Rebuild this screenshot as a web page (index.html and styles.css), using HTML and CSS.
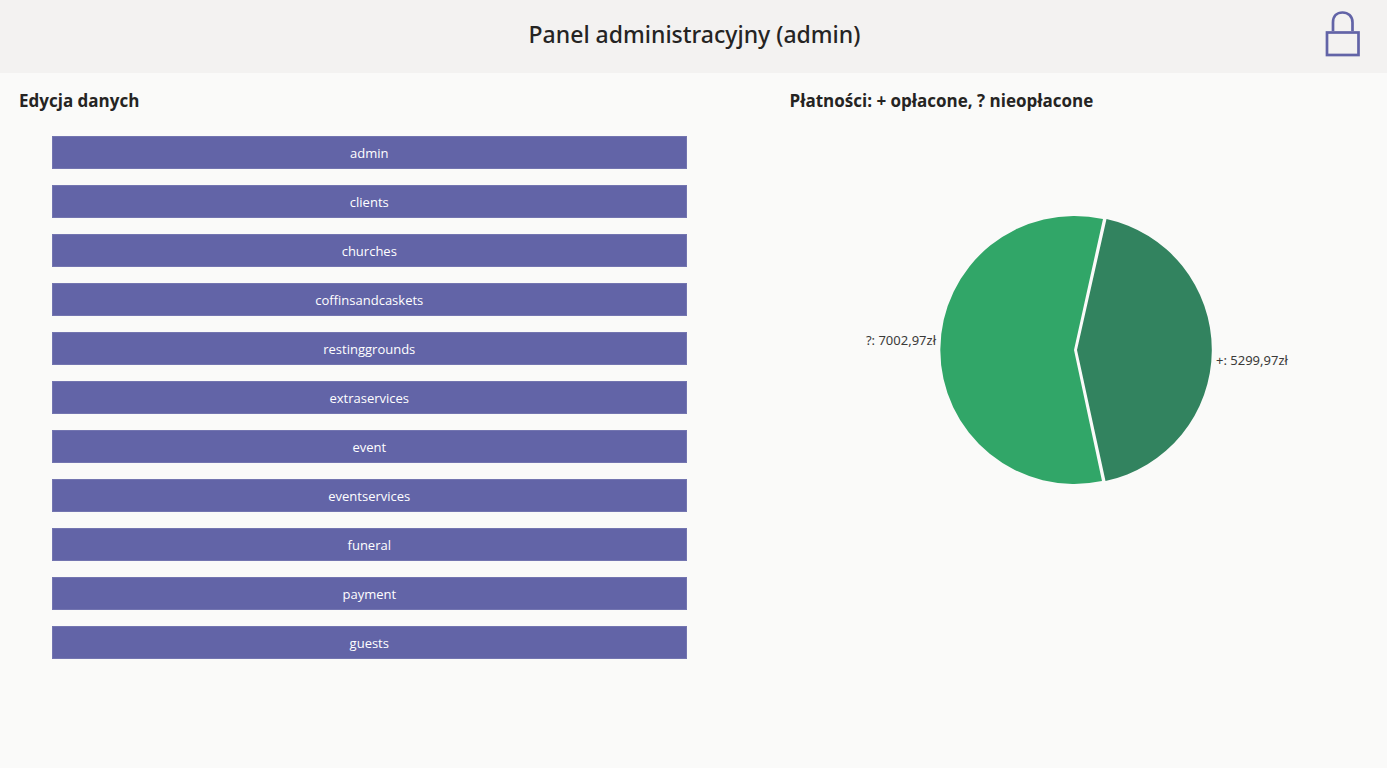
FILE: index.html
```html
<!DOCTYPE html>
<html lang="pl">
<head>
<meta charset="utf-8">
<title>Panel administracyjny</title>
<link rel="stylesheet" href="styles.css">
</head>
<body>
<header class="topbar">
  <h1 class="title">Panel administracyjny (admin)</h1>
  <button class="lock" type="button" aria-label="Wyloguj">
    <svg width="36" height="48" viewBox="0 0 36 48" fill="none" stroke="#6264a7" aria-hidden="true">
      <path d="M8 21V12.500C8 6 12 2.500 17.500 2.500S27.500 6 27.500 12.500V21" stroke-width="2.700"/>
      <rect x="2" y="22.500" width="31.500" height="22.500" stroke-width="2.700"/>
    </svg>
  </button>
</header>
<main class="columns">
  <section class="panel">
    <h2 class="heading">Edycja danych</h2>
    <div class="tables">
      <button class="entry" type="button">admin</button>
      <button class="entry" type="button">clients</button>
      <button class="entry" type="button">churches</button>
      <button class="entry" type="button">coffinsandcaskets</button>
      <button class="entry" type="button">restinggrounds</button>
      <button class="entry" type="button">extraservices</button>
      <button class="entry" type="button">event</button>
      <button class="entry" type="button">eventservices</button>
      <button class="entry" type="button">funeral</button>
      <button class="entry" type="button">payment</button>
      <button class="entry" type="button">guests</button>
    </div>
  </section>
  <section class="panel">
    <h2 class="heading">Płatności: + opłacone, ? nieopłacone</h2>
    <svg class="chart" viewBox="0 0 480 280" role="img" aria-label="Płatności">
      <path class="unpaid" d="M235 140 L264 9 A134 134 0 1 0 263 271 Z"/>
      <path class="paid" d="M238 140 L267.500 9 A134 134 0 0 1 266.500 271 Z"/>
      <text class="label" x="97" y="135" text-anchor="end">?: 7002,97zł</text>
      <text class="label" x="377" y="155">+: 5299,97zł</text>
    </svg>
  </section>
</main>
</body>
</html>
```
FILE: styles.css
```css
* {
  box-sizing: border-box;
}

body {
  margin: 0;
  background: #fafaf9;
  color: #252423;
  font-family: "Segoe UI", "Open Sans", "Noto Sans", sans-serif;
}

.topbar {
  display: grid;
  grid-template-columns: 1fr auto 1fr;
  align-items: center;
  padding: 10px 26px 15px 28px;
  background: #f3f2f1;
}

.title {
  grid-column: 2;
  margin: 0;
  font-family: "Segoe UI", "Noto Sans", sans-serif;
  font-size: 23px;
  line-height: 32px;
  font-weight: 500;
}

.lock {
  justify-self: end;
  display: flex;
  padding: 0;
  border: 0;
  background: none;
  cursor: pointer;
}

.columns {
  display: grid;
  grid-template-columns: 5fr 4fr;
}

.panel {
  padding: 16px 19px;
}

.heading {
  margin: 0;
  font-size: 17px;
  line-height: 24px;
  font-weight: 700;
}

.tables {
  display: grid;
  gap: 16px;
  padding: 23px 65px 0 33px;
}

.entry {
  height: 33px;
  padding: 0;
  border: 1px solid #7375b0;
  background: #6264a7;
  color: #fff;
  font: inherit;
  font-size: 13px;
  cursor: pointer;
}

.chart {
  display: block;
  width: 100%;
  max-width: 480px;
  margin: 97px auto 0;
}

.unpaid {
  fill: #31a668;
}

.paid {
  fill: #32835f;
}

.label {
  fill: #3b3a39;
  font-family: "Segoe UI", "Noto Sans", sans-serif;
  font-size: 13px;
}
```
